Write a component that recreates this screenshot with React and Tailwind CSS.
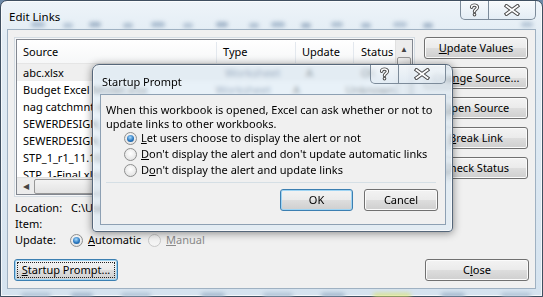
import React from 'react';

const btnBase =
  'relative flex items-center justify-center h-[22px] rounded-[3px] border text-[11px] text-black bg-[linear-gradient(#f3f3f3_0%,#ebebeb_48%,#dddddd_52%,#cfcfcf_100%)]';
const btnNormal = `${btnBase} border-[#707070] shadow-[inset_0_0_0_1px_#fbfbfb]`;
const btnFocus = `${btnBase} border-[#3c7fb1] shadow-[inset_0_0_0_1px_#9fd4f3]`;

const rows = [
  ['abc.xlsx', 'Worksheet', 'A', 'OK'],
  ['Budget Excel Model.xlsx', 'Worksheet', 'A', 'Unknown'],
  ['nag catchmnt data.xlsx', 'Worksheet', 'A', 'Unknown'],
  ['SEWERDESIGN_r1.xlsx', 'Worksheet', 'A', 'Unknown'],
  ['SEWERDESIGN_r2.xlsx', 'Worksheet', 'A', 'Unknown'],
  ['STP_1_r1_11.10.xlsx', 'Worksheet', 'A', 'Unknown'],
  ['STP_1-Final.xlsx', 'Worksheet', 'A', 'Unknown'],
];

// blurred desktop showing through the glass frame
const spots = [
  [30, 21, 14, '#8aa2bc'], [62, 22, 10, '#9bb0c6'], [88, 21, 12, '#7f97b2'], [122, 22, 10, '#93a9c0'],
  [150, 21, 14, '#8aa2bc'], [182, 22, 10, '#9bb0c6'], [215, 21, 12, '#7f97b2'], [248, 22, 10, '#93a9c0'],
  [270, 21, 14, '#8aa2bc'], [300, 22, 10, '#7f97b2'], [330, 21, 12, '#93a9c0'], [360, 22, 10, '#8aa2bc'],
  [392, 21, 14, '#9bb0c6'], [422, 22, 10, '#7f97b2'], [520, 21, 12, '#9bb0c6'],
  [20, 292, 30, '#9db3c9'], [70, 292, 22, '#8aa2bc'], [120, 292, 30, '#9db3c9'], [200, 292, 24, '#8aa2bc'],
  [262, 292, 30, '#9db3c9'], [320, 292, 24, '#8aa2bc'], [372, 292, 38, '#d9e36a'], [440, 292, 24, '#8aa2bc'],
  [500, 292, 30, '#9db3c9'],
];

function HelpGlyph() {
  return (
    <svg width="11" height="14" viewBox="0 0 11 14">
      <g fill="none" strokeLinecap="round" strokeLinejoin="round">
        <path d="M2.6 4.2 C2.6 1.4 8.4 1.4 8.4 4.2 C8.4 6.4 5.5 6.3 5.5 8.6" stroke="#4a4a4a" strokeWidth="3.4" />
        <path d="M5.5 11.6 L5.5 11.7" stroke="#4a4a4a" strokeWidth="3.6" />
        <path d="M2.6 4.2 C2.6 1.4 8.4 1.4 8.4 4.2 C8.4 6.4 5.5 6.3 5.5 8.6" stroke="#ffffff" strokeWidth="1.5" />
        <path d="M5.5 11.6 L5.5 11.7" stroke="#ffffff" strokeWidth="1.6" />
      </g>
    </svg>
  );
}

function CloseGlyph() {
  return (
    <svg width="16" height="12" viewBox="0 0 16 12">
      <g fill="none" strokeLinecap="square">
        <path d="M2.5 2 L13.5 10 M13.5 2 L2.5 10" stroke="#4a4a4a" strokeWidth="3.8" />
        <path d="M2.5 2 L13.5 10 M13.5 2 L2.5 10" stroke="#ffffff" strokeWidth="1.8" />
      </g>
    </svg>
  );
}

function CaptionButtons({ className }) {
  return (
    <div className={`absolute top-0 flex h-[19px] ${className}`}>
      <div className="w-[29px] h-full flex items-center justify-center border border-t-0 border-[#7c8b9a] rounded-bl-[5px] bg-[linear-gradient(rgba(255,255,255,0.55),rgba(225,235,244,0.55))]">
        <HelpGlyph />
      </div>
      <div className="w-[47px] h-full flex items-center justify-center border border-t-0 border-l-0 border-[#7c8b9a] rounded-br-[5px] bg-[linear-gradient(rgba(255,255,255,0.55),rgba(225,235,244,0.55))]">
        <CloseGlyph />
      </div>
    </div>
  );
}

function Radio({ checked, disabled }) {
  return (
    <span
      className={`flex items-center justify-center w-[13px] h-[13px] rounded-full border shrink-0 ${
        disabled
          ? 'border-[#c8c8c8] bg-[#f4f4f4]'
          : 'border-[#8e8f8f] bg-[radial-gradient(circle_at_50%_40%,#ffffff,#dcdcdc)]'
      }`}
    >
      {checked && (
        <span className="w-[7px] h-[7px] rounded-full bg-[radial-gradient(circle_at_45%_35%,#a8dcff,#2b78c0_55%,#0c4a86)]" />
      )}
    </span>
  );
}

function ListBox() {
  return (
    <div className="w-[401px] h-[160px] border border-[#d4dce3] p-[1px] bg-[#f6f7f8] shrink-0">
      <div className="w-full h-full border border-[#828790] bg-white grid grid-cols-[1fr_17px] grid-rows-[1fr_17px] overflow-hidden">
        <div className="overflow-hidden">
          <div className="flex h-[24px] pt-[2px] bg-[linear-gradient(#ffffff,#f6f7f8)] border-b border-[#e5e5e5] text-[11px] items-center">
            <div className="w-[200px] pl-[6px] border-r border-[#e3e8ee] h-full flex items-center">Source</div>
            <div className="w-[79px] pl-[6px] border-r border-[#e3e8ee] h-full flex items-center">Type</div>
            <div className="w-[58px] pl-[6px] border-r border-[#e3e8ee] h-full flex items-center">Update</div>
            <div className="flex-1 pl-[7px] h-full flex items-center">Status</div>
          </div>
          {rows.map((r, i) => (
            <div key={i} className={`flex h-[17px] pt-[1px] items-center text-[11px] whitespace-nowrap ${i === 0 ? 'bg-[#efefef]' : ''}`}>
              <div className="w-[200px] pl-[6px] overflow-hidden">{r[0]}</div>
              <div className="w-[79px] pl-[8px] text-[#1f3d63]">{r[1]}</div>
              <div className="w-[58px] pl-[10px]">{r[2]}</div>
              <div className="flex-1 pl-[7px]">{r[3]}</div>
            </div>
          ))}
        </div>
        <div className="bg-[#ececec] border-l border-[#e0e0e0] flex flex-col">
          <div className="h-[17px] flex items-center justify-center text-[8px] text-[#444]">▲</div>
          <div className="mx-[1px] h-[120px] rounded-[2px] border border-[#979797] bg-[linear-gradient(90deg,#f3f3f3,#e3e3e3)]" />
        </div>
        <div className="bg-[#ececec] border-t border-[#e0e0e0] flex items-center">
          <div className="w-[17px] h-full flex items-center justify-center text-[8px] text-[#444]">◀</div>
          <div className="h-[15px] w-[200px] rounded-[2px] border border-[#979797] bg-[linear-gradient(#f3f3f3,#e3e3e3)]" />
        </div>
        <div className="bg-[#f0f0f0]" />
      </div>
    </div>
  );
}

function StartupPrompt() {
  return (
    <div className="absolute left-[91px] top-[63px] w-[361px] h-[168px] rounded-t-[7px] rounded-b-[4px] border border-[#56677a] bg-[rgba(220,233,244,0.66)] backdrop-blur-[2px] shadow-[0_1px_9px_rgba(0,0,0,0.45),inset_0_0_0_1px_rgba(255,255,255,0.6)] pl-[7px] pr-[6px] pb-[6px] flex flex-col">
      <div className="h-[29px] flex items-center pl-[2px] pt-[5px] text-[11px] text-black">Startup Prompt</div>
      <CaptionButtons className="right-[6px]" />
      <div className="flex-1 border border-[#8da0b3] bg-[#f0f0f0] flex flex-col text-[11px] text-black">
        <p className="pl-[5px] pt-[8px] leading-[14px] whitespace-nowrap">
          When this workbook is opened, Excel can ask whether or not to
          <br />
          update links to other workbooks.
        </p>
        <div className="ml-[23px] -mt-[1px] flex flex-col whitespace-nowrap">
          <div className="h-[16px] flex items-center gap-[4px]">
            <Radio checked />
            <span className="pt-[1px]"><u>L</u>et users choose to display the alert or not</span>
          </div>
          <div className="h-[16px] flex items-center gap-[4px]">
            <Radio />
            <span className="pt-[1px]"><u>D</u>on't display the alert and don't update automatic links</span>
          </div>
          <div className="h-[16px] flex items-center gap-[4px]">
            <Radio />
            <span className="pt-[1px]">D<u>o</u>n't display the alert and update links</span>
          </div>
        </div>
        <div className="ml-[5px] mr-[9px] mt-[4px] h-px bg-[#d5dfe5]" />
        <div className="mt-[6px] mr-[7px] flex justify-end gap-[11px]">
          <div className={`${btnFocus} w-[73px]`}>OK</div>
          <div className={`${btnNormal} w-[74px]`}>Cancel</div>
        </div>
      </div>
    </div>
  );
}

export default function App() {
  return (
    <div className="relative w-[543px] h-[297px] overflow-hidden bg-[#6d8aa8] font-['Noto_Sans',sans-serif] text-black">
      <div className="relative w-full h-full rounded-t-[7px] border border-[#3f4f60] bg-[linear-gradient(180deg,#eef4f9_0%,#e2ecf4_12%,#d5e3ef_100%)] shadow-[inset_0_0_0_1px_rgba(255,255,255,0.7)] flex flex-col px-[6px] pb-[7px]">
        {spots.map(([x, y, w, c], i) => (
          <div
            key={i}
            className="absolute h-[5px] rounded-full blur-[2px] opacity-70"
            style={{ left: x, top: y, width: w, background: c }}
          />
        ))}
        <div className="relative h-[28px] flex items-center pl-[2px] pt-[3px] text-[11.5px]">Edit Links</div>
        <CaptionButtons className="right-[6px]" />

        <div className="relative flex-1 border border-[#9fb1c2] bg-[#f0f0f0] pl-[6px] pr-[6px] pt-[7px] flex flex-col text-[11px]">
          <div className="flex gap-[9px]">
            <ListBox />
            <div className="w-[104px] flex flex-col gap-[8px]">
              <div className={btnNormal}><span><u>U</u>pdate Values</span></div>
              <div className={btnNormal}><span>Cha<u>n</u>ge Source...</span></div>
              <div className={btnNormal}><span><u>O</u>pen Source</span></div>
              <div className={btnNormal}><span><u>B</u>reak Link</span></div>
              <div className={btnNormal}><span><u>C</u>heck Status</span></div>
            </div>
          </div>

          <div className="mt-[3px] pl-[1px] flex flex-col leading-[16px]">
            <div className="h-[16px] flex items-center">
              <span className="w-[56px]">Location:</span>
              <span>C:\Users\Documents\Links</span>
            </div>
            <div className="h-[16px] flex items-center">
              <span className="w-[56px]">Item:</span>
            </div>
            <div className="h-[16px] flex items-center">
              <span className="w-[55px]">Update:</span>
              <Radio checked />
              <span className="ml-[5px]"><u>A</u>utomatic</span>
              <span className="ml-[7px]"><Radio disabled /></span>
              <span className="ml-[5px] text-[#8a8a8a]"><u>M</u>anual</span>
            </div>
          </div>

          <div className="mt-[11px] flex justify-between">
            <div className={`${btnFocus} w-[104px]`}>
              <span className="absolute inset-[2px] border border-dotted border-[#222]" />
              <span><u>S</u>tartup Prompt...</span>
            </div>
            <div className={`${btnNormal} w-[104px]`}><span>C<u>l</u>ose</span></div>
          </div>
        </div>

        <StartupPrompt />
      </div>
    </div>
  );
}
